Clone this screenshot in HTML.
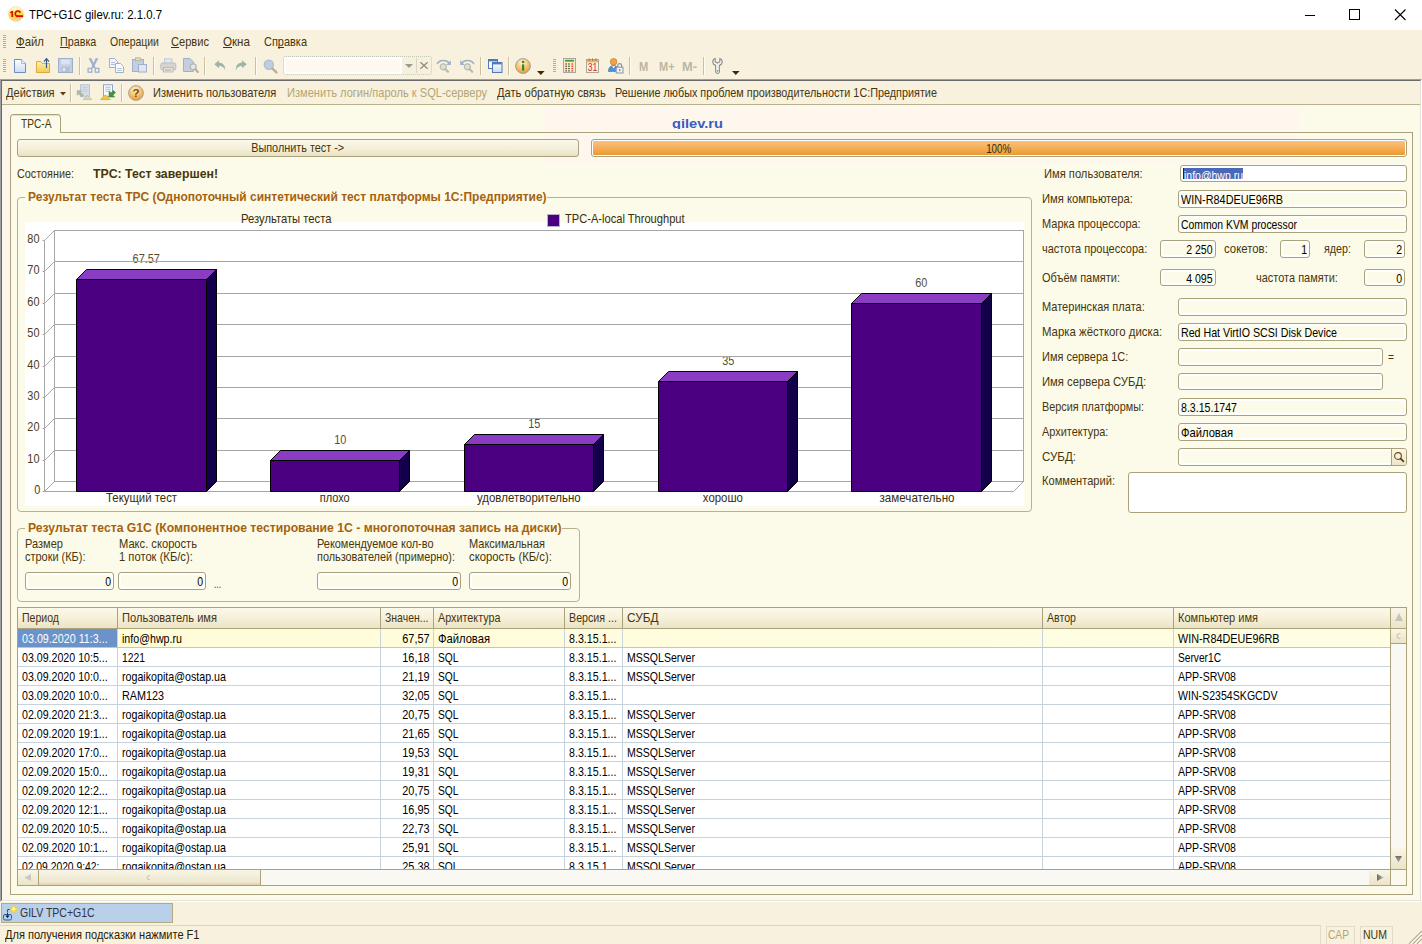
<!DOCTYPE html>
<html><head><meta charset="utf-8"><title>TPC+G1C gilev.ru: 2.1.0.7</title>
<style>

html,body{margin:0;padding:0}
body{width:1422px;height:944px;position:relative;overflow:hidden;background:#fff;font-family:"Liberation Sans",sans-serif;font-size:13px;color:#46360c}
.a{position:absolute;box-sizing:border-box}
.t{position:absolute;white-space:nowrap;font-size:13px;line-height:13px;transform-origin:0 0;color:#46360c}
.f{border:1px solid #a9a27b;border-radius:3px;background:#fcfbea;box-shadow:inset 0 0 0 2px #fff}
.gb{border:1px solid #b9b18c;border-radius:4px}
.sep{width:2px;border-left:1px solid #c9c0a0;border-right:1px solid #fffdf2}
svg{position:absolute;overflow:visible}

</style></head><body>
<div class="a" style="left:0px;top:0px;width:1422px;height:30px;background:#fff"></div>
<svg style="left:8px;top:6px" width="16" height="16" viewBox="0 0 16 16"><defs><linearGradient id="g1c" x1="0" y1="0" x2="0" y2="1"><stop offset="0" stop-color="#fffbe6"/><stop offset=".22" stop-color="#fdf3a8"/><stop offset=".5" stop-color="#f8df2c"/><stop offset=".72" stop-color="#f6d845"/><stop offset="1" stop-color="#fad9b0"/></linearGradient></defs><circle cx="8" cy="8" r="7.4" fill="url(#g1c)" stroke="#ecc57a" stroke-width=".7" stroke-dasharray="1 .5"/><path d="M2.1 6L3.9 4.9H5.1V11H3.4V6.7L2.1 7.4z" fill="#e40a04"/><path d="M12.4 6.6A2.7 2.7 0 1 0 9.6 10.4" fill="none" stroke="#e40a04" stroke-width="1.7"/><rect x="8.2" y="9.2" width="7" height="1.9" fill="#e40a04"/></svg>
<span class="t" style="left:28.6px;top:9px;transform:scaleX(0.9490);font-size:12px;line-height:12px;color:#000">TPC+G1C gilev.ru: 2.1.0.7</span>
<svg style="left:1290px;top:0" width="132" height="30" viewBox="0 0 132 30" shape-rendering="crispEdges"><path d="M15 15.5h10" stroke="#000" stroke-width="1"/><rect x="59.5" y="9.5" width="10" height="10" fill="none" stroke="#000"/><path d="M105 9.5l10.5 10.5M115.5 9.5L105 20" stroke="#000" stroke-width="1.1" shape-rendering="auto"/></svg>
<div class="a" style="left:0px;top:30px;width:1422px;height:49px;background:#f8f1de"></div>
<div class="a" style="left:3px;top:35px;width:3px;height:14px;background:repeating-linear-gradient(#b9af86 0,#b9af86 1px,transparent 1px,transparent 2px)"></div>
<div class="a" style="left:3px;top:59px;width:3px;height:14px;background:repeating-linear-gradient(#b9af86 0,#b9af86 1px,transparent 1px,transparent 2px)"></div>
<span class="t" style="left:16.3px;top:35px;transform:scaleX(0.8727)">Файл</span>
<div class="a" style="left:16px;top:47px;width:9px;height:1px;background:#46360c"></div>
<span class="t" style="left:60.2px;top:35px;transform:scaleX(0.8265)">Правка</span>
<div class="a" style="left:60px;top:47px;width:8px;height:1px;background:#46360c"></div>
<span class="t" style="left:110px;top:35px;transform:scaleX(0.8053)">Операции</span>
<span class="t" style="left:171px;top:35px;transform:scaleX(0.8533)">Сервис</span>
<div class="a" style="left:171px;top:47px;width:8px;height:1px;background:#46360c"></div>
<span class="t" style="left:223px;top:35px;transform:scaleX(0.8939)">Окна</span>
<div class="a" style="left:223px;top:47px;width:9px;height:1px;background:#46360c"></div>
<span class="t" style="left:264px;top:35px;transform:scaleX(0.8429)">Справка</span>
<div class="a" style="left:278px;top:47px;width:6px;height:1px;background:#46360c"></div>
<div class="a" style="left:0px;top:79px;width:1422px;height:823px;background:#fcfbea;border-top:1px solid #a0a0a0;border-left:1px solid #a0a0a0;border-right:1px solid #fff;border-bottom:1px solid #fff"></div>
<div class="a" style="left:1px;top:80px;width:1420px;height:821px;border-top:1px solid #696969;border-left:1px solid #696969;border-right:1px solid #e6e3d6;border-bottom:1px solid #e3e3e0"></div>
<div class="a" style="left:2px;top:81px;width:1418px;height:24px;background:#f8f1de;border-bottom:1px solid #b9b18c"></div>
<span class="t" style="left:6.4px;top:86px;transform:scaleX(0.8531)">Действия</span>
<svg style="left:60px;top:92px" width="6" height="4" viewBox="0 0 6 4"><path d="M0 0h6L3 3.5z" fill="#5a4510"/></svg>
<div class="a sep" style="left:70px;top:84px;width:2px;height:18px;"></div>
<div class="a sep" style="left:121px;top:84px;width:2px;height:18px;"></div>
<span class="t" style="left:152.7px;top:86px;transform:scaleX(0.8528)">Изменить пользователя</span>
<span class="t" style="left:286.6px;top:86px;transform:scaleX(0.8525);color:#b4a672">Изменить логин/пароль к SQL-серверу</span>
<span class="t" style="left:496.6px;top:86px;transform:scaleX(0.8561)">Дать обратную связь</span>
<span class="t" style="left:615.3px;top:86px;transform:scaleX(0.8328)">Решение любых проблем производительности 1С:Предприятие</span>
<div class="a" style="left:0px;top:902px;width:1422px;height:42px;background:#f8f1de"></div>
<div class="a" style="left:1px;top:903px;width:172px;height:20px;background:#b9d0ea;border:1px solid #b3aa80"></div>
<span class="t" style="left:19.8px;top:906px;transform:scaleX(0.8088);color:#33333f">GILV TPC+G1C</span>
<div class="a" style="left:0px;top:925px;width:1321px;height:19px;border-top:1px solid #ddd6be;border-right:1px solid #e3dcc4"></div>
<span class="t" style="left:4.5px;top:928px;transform:scaleX(0.8493);color:#2a2208">Для получения подсказки нажмите F1</span>
<div class="a" style="left:1326px;top:926px;width:29px;height:18px;border:1px solid #e3dcc4;border-bottom:0"></div>
<div class="a" style="left:1360px;top:926px;width:33px;height:18px;border:1px solid #e3dcc4;border-bottom:0"></div>
<span class="t" style="left:1328.3px;top:928px;transform:scaleX(0.7855);color:#b4a672">CAP</span>
<span class="t" style="left:1363.4px;top:928px;transform:scaleX(0.8106)">NUM</span>
<svg style="left:1408px;top:930px" width="14" height="14" viewBox="0 0 14 14"><path d="M14 1L1 14M14 5L5 14M14 9L9 14" stroke="#b4ac88" stroke-width="1.3"/><path d="M14 2.4L2.4 14M14 6.4L6.4 14M14 10.4L10.4 14" stroke="#fff" stroke-width="1"/></svg>
<div class="a" style="left:544px;top:105px;width:755px;height:59px;background:#fdf7ee"></div>
<div class="a" style="left:2px;top:105px;width:9px;height:795px;background:#fbf6ea"></div>
<div class="a" style="left:10px;top:132px;width:1403px;height:763px;border:1px solid #a9a27b;border-top-left-radius:0"></div>
<div class="a" style="left:10px;top:114px;width:51px;height:19px;border:1px solid #a9a27b;border-bottom:0;border-radius:4px 4px 0 0;background:#fcfbea"></div>
<div class="a" style="left:13px;top:115px;width:45px;height:1px;background:#fbdc9a"></div>
<span class="t" style="left:20.5px;top:117px;transform:scaleX(0.7821)">TPC-A</span>
<div class="a" style="left:600px;top:113px;width:200px;height:16px;overflow:hidden">
<span class="t" style="left:72.1px;top:4px;transform:scaleX(1.0844);font-size:13.5px;line-height:13.5px;font-weight:bold;color:#3a5cc0">gilev.ru</span>
</div>
<div class="a" style="left:17px;top:139px;width:562px;height:18px;border:1px solid #a9a27b;border-radius:3px;background:linear-gradient(#fbf8ea 0,#f4efd9 55%,#e9e2c4 100%)"></div>
<span class="t" style="left:242.3px;transform-origin:50% 0;top:141px;transform:scaleX(0.8349)">Выполнить тест -&gt;</span>
<div class="a" style="left:591px;top:139px;width:816px;height:18px;border:1px solid #a9a27b;border-radius:3px;background:#fff"></div>
<div class="a" style="left:593px;top:141px;width:812px;height:14px;border-radius:1px;background:linear-gradient(#f9c27c 0,#f5ae58 50%,#ea9a32 100%)"></div>
<span class="t" style="left:982.37px;transform-origin:50% 0;top:142px;transform:scaleX(0.7515);color:#3a2a08">100%</span>
<span class="t" style="left:16.5px;top:167px;transform:scaleX(0.8321)">Состояние:</span>
<span class="t" style="left:93px;top:167px;transform:scaleX(0.9451);font-weight:bold">TPC: Тест завершен!</span>
<div class="a gb" style="left:17px;top:197px;width:1015px;height:315px;"></div>
<div class="a" style="left:25px;top:195px;width:521.5px;height:5px;background:#fcfbea"></div>
<span class="t" style="left:27.5px;top:190px;transform:scaleX(0.9230);font-weight:bold;color:#a5620e">Результат теста TPC (Однопоточный синтетический тест платформы 1С:Предприятие)</span>
<div class="a gb" style="left:17px;top:528px;width:563px;height:74px;"></div>
<div class="a" style="left:25px;top:526px;width:536.5px;height:5px;background:#fcfbea"></div>
<span class="t" style="left:27.5px;top:521px;transform:scaleX(0.9381);font-weight:bold;color:#a5620e">Результат теста G1C (Компонентное тестирование 1С - многопоточная запись на диски)</span>
<span class="t" style="left:25px;top:537px;transform:scaleX(0.8503)">Размер</span>
<span class="t" style="left:25px;top:550px;transform:scaleX(0.8419)">строки (КБ):</span>
<span class="t" style="left:118.7px;top:537px;transform:scaleX(0.8571)">Макс. скорость</span>
<span class="t" style="left:118.7px;top:550px;transform:scaleX(0.8614)">1 поток (КБ/с):</span>
<span class="t" style="left:317.3px;top:537px;transform:scaleX(0.8405)">Рекомендуемое кол-во</span>
<span class="t" style="left:317.3px;top:550px;transform:scaleX(0.8362)">пользователей (примерно):</span>
<span class="t" style="left:469.2px;top:537px;transform:scaleX(0.8466)">Максимальная</span>
<span class="t" style="left:469.2px;top:550px;transform:scaleX(0.8684)">скорость (КБ/с):</span>
<div class="a f" style="left:25px;top:572px;width:89px;height:18px;"></div>
<span class="t" style="left:103.77px;transform-origin:100% 0;top:575px;transform:scaleX(0.8100);color:#000">0</span>
<div class="a f" style="left:118px;top:572px;width:88px;height:18px;"></div>
<span class="t" style="left:195.77px;transform-origin:100% 0;top:575px;transform:scaleX(0.8100);color:#000">0</span>
<div class="a f" style="left:317px;top:572px;width:144px;height:18px;"></div>
<span class="t" style="left:450.77px;transform-origin:100% 0;top:575px;transform:scaleX(0.8100);color:#000">0</span>
<div class="a f" style="left:469px;top:572px;width:102px;height:18px;"></div>
<span class="t" style="left:560.77px;transform-origin:100% 0;top:575px;transform:scaleX(0.8100);color:#000">0</span>
<span class="t" style="left:213.5px;top:577px;transform:scaleX(0.6465)">...</span>
<span class="t" style="left:1043.8px;top:167px;transform:scaleX(0.8591)">Имя пользователя:</span>
<span class="t" style="left:1041.6px;top:192px;transform:scaleX(0.8638)">Имя компьютера:</span>
<span class="t" style="left:1041.6px;top:217px;transform:scaleX(0.8453)">Марка процессора:</span>
<span class="t" style="left:1041.6px;top:242px;transform:scaleX(0.8462)">частота процессора:</span>
<span class="t" style="left:1041.6px;top:271px;transform:scaleX(0.8467)">Объём памяти:</span>
<span class="t" style="left:1041.6px;top:300px;transform:scaleX(0.8479)">Материнская плата:</span>
<span class="t" style="left:1041.6px;top:325px;transform:scaleX(0.8764)">Марка жёсткого диска:</span>
<span class="t" style="left:1041.6px;top:350px;transform:scaleX(0.8443)">Имя сервера 1С:</span>
<span class="t" style="left:1041.6px;top:375px;transform:scaleX(0.8673)">Имя сервера СУБД:</span>
<span class="t" style="left:1041.6px;top:400px;transform:scaleX(0.8350)">Версия платформы:</span>
<span class="t" style="left:1041.6px;top:425px;transform:scaleX(0.8412)">Архитектура:</span>
<span class="t" style="left:1041.6px;top:450px;transform:scaleX(0.8885)">СУБД:</span>
<span class="t" style="left:1041.6px;top:474px;transform:scaleX(0.8536)">Комментарий:</span>
<div class="a" style="left:1180px;top:165px;width:227px;height:17px;border:1px solid #a9a27b;border-radius:3px;background:#fff"></div>
<div class="a" style="left:1183px;top:168px;width:60px;height:11px;background:#4a68b8;overflow:hidden">
<span class="t" style="left:0.5px;top:1px;transform:scaleX(0.8060);color:#fff">info@hwp.ru</span>
</div>
<div class="a" style="left:1183px;top:168px;width:1px;height:11px;background:#2a2010"></div>
<div class="a f" style="left:1178px;top:190px;width:229px;height:18px;"></div>
<span class="t" style="left:1181px;top:193px;transform:scaleX(0.8353);color:#000">WIN-R84DEUE96RB</span>
<div class="a f" style="left:1178px;top:215px;width:229px;height:18px;"></div>
<span class="t" style="left:1181px;top:218px;transform:scaleX(0.7987);color:#000">Common KVM processor</span>
<div class="a f" style="left:1160px;top:240px;width:56px;height:18px;"></div>
<span class="t" style="left:1180.45px;transform-origin:100% 0;top:243px;transform:scaleX(0.8100);color:#000">2 250</span>
<span class="t" style="left:1223.8px;top:242px;transform:scaleX(0.8749)">сокетов:</span>
<div class="a f" style="left:1280px;top:240px;width:30px;height:18px;"></div>
<span class="t" style="left:1299.77px;transform-origin:100% 0;top:243px;transform:scaleX(0.8100);color:#000">1</span>
<span class="t" style="left:1323.6px;top:242px;transform:scaleX(0.8256)">ядер:</span>
<div class="a f" style="left:1364px;top:240px;width:41px;height:18px;"></div>
<span class="t" style="left:1394.77px;transform-origin:100% 0;top:243px;transform:scaleX(0.8100);color:#000">2</span>
<div class="a f" style="left:1160px;top:269px;width:56px;height:17px;"></div>
<span class="t" style="left:1180.45px;transform-origin:100% 0;top:272px;transform:scaleX(0.8100);color:#000">4 095</span>
<span class="t" style="left:1255.5px;top:271px;transform:scaleX(0.8442)">частота памяти:</span>
<div class="a f" style="left:1364px;top:269px;width:41px;height:17px;"></div>
<span class="t" style="left:1394.77px;transform-origin:100% 0;top:272px;transform:scaleX(0.8100);color:#000">0</span>
<div class="a f" style="left:1178px;top:298px;width:229px;height:18px;"></div>
<div class="a f" style="left:1178px;top:323px;width:229px;height:18px;"></div>
<span class="t" style="left:1181px;top:326px;transform:scaleX(0.8189);color:#000">Red Hat VirtIO SCSI Disk Device</span>
<div class="a f" style="left:1178px;top:348px;width:205px;height:18px;"></div>
<span class="t" style="left:1388px;top:350px;transform:scaleX(0.7901)">=</span>
<div class="a f" style="left:1178px;top:373px;width:205px;height:17px;"></div>
<div class="a f" style="left:1178px;top:398px;width:229px;height:18px;"></div>
<span class="t" style="left:1181px;top:401px;transform:scaleX(0.8151);color:#000">8.3.15.1747</span>
<div class="a f" style="left:1178px;top:423px;width:229px;height:18px;"></div>
<span class="t" style="left:1181px;top:426px;transform:scaleX(0.8611);color:#000">Файловая</span>
<div class="a f" style="left:1178px;top:448px;width:229px;height:18px;"></div>
<div class="a" style="left:1391px;top:449px;width:15px;height:16px;border-left:1px solid #a9a27b;border-radius:0 2px 2px 0;background:linear-gradient(#faf7ea,#ece6cc)"></div>
<svg style="left:1393px;top:451px" width="12" height="12" viewBox="0 0 12 12"><circle cx="5" cy="5" r="3.4" fill="#f4f0e0" stroke="#6b4a08" stroke-width="1.1"/><path d="M7.6 7.6L10.4 10.4" stroke="#5a3c06" stroke-width="1.7" stroke-linecap="round"/></svg>
<div class="a" style="left:1128px;top:472px;width:279px;height:41px;border:1px solid #a9a27b;border-radius:3px;background:#fff"></div>
<div class="a" style="left:25px;top:222px;width:999px;height:284px;background:#fff"></div>
<span class="t" style="left:240.5px;top:212px;transform:scaleX(0.8646);color:#3a2e0c">Результаты теста</span>
<div class="a" style="left:547px;top:214px;width:13px;height:13px;background:#4b0082;border:1px solid #b8b0c8"></div>
<span class="t" style="left:564.6px;top:212px;transform:scaleX(0.8545);color:#3a2e0c">TPC-A-local Throughput</span>
<span class="t" style="left:100.95px;transform-origin:50% 0;top:491px;transform:scaleX(0.8754);color:#3a2e0c">Текущий тест</span>
<span class="t" style="left:130.23px;transform-origin:50% 0;top:252px;transform:scaleX(0.8400);color:#5a4e30">67.57</span>
<span class="t" style="left:317.27px;transform-origin:50% 0;top:491px;transform:scaleX(0.8462);color:#3a2e0c">плохо</span>
<span class="t" style="left:332.77px;transform-origin:50% 0;top:433px;transform:scaleX(0.8400);color:#5a4e30">10</span>
<span class="t" style="left:470.16px;transform-origin:50% 0;top:491px;transform:scaleX(0.8821);color:#3a2e0c">удовлетворительно</span>
<span class="t" style="left:526.77px;transform-origin:50% 0;top:417px;transform:scaleX(0.8400);color:#5a4e30">15</span>
<span class="t" style="left:700.14px;transform-origin:50% 0;top:491px;transform:scaleX(0.8749);color:#3a2e0c">хорошо</span>
<span class="t" style="left:720.77px;transform-origin:50% 0;top:354px;transform:scaleX(0.8400);color:#5a4e30">35</span>
<span class="t" style="left:874.5px;transform-origin:50% 0;top:491px;transform:scaleX(0.8929);color:#3a2e0c">замечательно</span>
<span class="t" style="left:914.27px;transform-origin:50% 0;top:276px;transform:scaleX(0.8400);color:#5a4e30">60</span>
<svg style="left:0;top:0" width="1422" height="944" viewBox="0 0 1422 944"><g fill="none" stroke="#a6a6a6" stroke-width="1"><rect x="54.5" y="230.5" width="969" height="251"/><path d="M54.5 450.5H1023.5"/><path d="M54.5 418.5H1023.5"/><path d="M54.5 387.5H1023.5"/><path d="M54.5 356.5H1023.5"/><path d="M54.5 324.5H1023.5"/><path d="M54.5 293.5H1023.5"/><path d="M54.5 261.5H1023.5"/><path d="M54.5 481.5L44.5 491.5h-2"/><path d="M54.5 450.5L44.5 460.5h-2"/><path d="M54.5 418.5L44.5 428.5h-2"/><path d="M54.5 387.5L44.5 397.5h-2"/><path d="M54.5 356.5L44.5 366.5h-2"/><path d="M54.5 324.5L44.5 334.5h-2"/><path d="M54.5 293.5L44.5 303.5h-2"/><path d="M54.5 261.5L44.5 271.5h-2"/><path d="M54.5 230.5L44.5 240.5h-2"/><path d="M44.5 240.5V491.5"/><path d="M44.5 491.5H1013.5L1023.5 481.5"/></g><g stroke="#000" stroke-width="1" stroke-linejoin="round"><path d="M76.5 279.5L86.5 269.5H216.5L206.5 279.5z" fill="#8a3cc2"/><path d="M206.5 279.5L216.5 269.5V481.5L206.5 491.5z" fill="#12004a"/><rect x="76.5" y="279.5" width="130" height="212" fill="#4b0082"/></g><g stroke="#000" stroke-width="1" stroke-linejoin="round"><path d="M270.5 460.5L280.5 450.5H409.5L399.5 460.5z" fill="#8a3cc2"/><path d="M399.5 460.5L409.5 450.5V481.5L399.5 491.5z" fill="#12004a"/><rect x="270.5" y="460.5" width="129" height="31" fill="#4b0082"/></g><g stroke="#000" stroke-width="1" stroke-linejoin="round"><path d="M464.5 444.5L474.5 434.5H603.5L593.5 444.5z" fill="#8a3cc2"/><path d="M593.5 444.5L603.5 434.5V481.5L593.5 491.5z" fill="#12004a"/><rect x="464.5" y="444.5" width="129" height="47" fill="#4b0082"/></g><g stroke="#000" stroke-width="1" stroke-linejoin="round"><path d="M658.5 381.5L668.5 371.5H797.5L787.5 381.5z" fill="#8a3cc2"/><path d="M787.5 381.5L797.5 371.5V481.5L787.5 491.5z" fill="#12004a"/><rect x="658.5" y="381.5" width="129" height="110" fill="#4b0082"/></g><g stroke="#000" stroke-width="1" stroke-linejoin="round"><path d="M851.5 303.5L861.5 293.5H991.5L981.5 303.5z" fill="#8a3cc2"/><path d="M981.5 303.5L991.5 293.5V481.5L981.5 491.5z" fill="#12004a"/><rect x="851.5" y="303.5" width="130" height="188" fill="#4b0082"/></g></svg>
<span class="t" style="left:32.57px;transform-origin:100% 0;top:483px;transform:scaleX(0.8400);color:#4a3c1a">0</span>
<span class="t" style="left:25.33px;transform-origin:100% 0;top:452px;transform:scaleX(0.8400);color:#4a3c1a">10</span>
<span class="t" style="left:25.33px;transform-origin:100% 0;top:420px;transform:scaleX(0.8400);color:#4a3c1a">20</span>
<span class="t" style="left:25.33px;transform-origin:100% 0;top:389px;transform:scaleX(0.8400);color:#4a3c1a">30</span>
<span class="t" style="left:25.33px;transform-origin:100% 0;top:358px;transform:scaleX(0.8400);color:#4a3c1a">40</span>
<span class="t" style="left:25.33px;transform-origin:100% 0;top:326px;transform:scaleX(0.8400);color:#4a3c1a">50</span>
<span class="t" style="left:25.33px;transform-origin:100% 0;top:295px;transform:scaleX(0.8400);color:#4a3c1a">60</span>
<span class="t" style="left:25.33px;transform-origin:100% 0;top:263px;transform:scaleX(0.8400);color:#4a3c1a">70</span>
<span class="t" style="left:25.33px;transform-origin:100% 0;top:232px;transform:scaleX(0.8400);color:#4a3c1a">80</span>
<div class="a" style="left:17px;top:607px;width:1390px;height:279px;border:1px solid #a9a27b;background:#fff"></div>
<div class="a" style="left:18px;top:608px;width:1372px;height:21px;background:linear-gradient(#fcf9ea 0,#f6f0da 50%,#ebe3c4 100%);border-bottom:1px solid #a9a27b"></div>
<span class="t" style="left:22px;top:611px;transform:scaleX(0.8112)">Период</span>
<div class="a" style="left:117px;top:608px;width:1px;height:20px;background:#a9a27b"></div>
<span class="t" style="left:121.5px;top:611px;transform:scaleX(0.8542)">Пользователь имя</span>
<div class="a" style="left:380px;top:608px;width:1px;height:20px;background:#a9a27b"></div>
<span class="t" style="left:384.5px;top:611px;transform:scaleX(0.8058)">Значен...</span>
<div class="a" style="left:433px;top:608px;width:1px;height:20px;background:#a9a27b"></div>
<span class="t" style="left:437.5px;top:611px;transform:scaleX(0.8297)">Архитектура</span>
<div class="a" style="left:564px;top:608px;width:1px;height:20px;background:#a9a27b"></div>
<span class="t" style="left:568.5px;top:611px;transform:scaleX(0.8220)">Версия ...</span>
<div class="a" style="left:622px;top:608px;width:1px;height:20px;background:#a9a27b"></div>
<span class="t" style="left:626.5px;top:611px;transform:scaleX(0.9118)">СУБД</span>
<div class="a" style="left:1042px;top:608px;width:1px;height:20px;background:#a9a27b"></div>
<span class="t" style="left:1046.5px;top:611px;transform:scaleX(0.8151)">Автор</span>
<div class="a" style="left:1173px;top:608px;width:1px;height:20px;background:#a9a27b"></div>
<span class="t" style="left:1177.5px;top:611px;transform:scaleX(0.8495)">Компьютер имя</span>
<div class="a" style="left:18px;top:629px;width:1372px;height:240px;overflow:hidden">
<div class="a" style="left:0px;top:0px;width:1372px;height:18px;background:linear-gradient(90deg,#fffcd8 0,#fffde0 60%,#fffde4 100%)"></div>
<div class="a" style="left:0px;top:0px;width:99px;height:18px;background:#6b93c9"></div>
<div class="a" style="left:0px;top:18px;width:1372px;height:1px;background:#c6d3dc"></div>
<span class="t" style="left:3.8px;top:3px;transform:scaleX(0.8250);color:#fff">03.09.2020 11:3...</span>
<span class="t" style="left:103.8px;top:3px;transform:scaleX(0.8196);color:#000">info@hwp.ru</span>
<span class="t" style="left:378.75px;transform-origin:100% 0;top:3px;transform:scaleX(0.8388);color:#000">67,57</span>
<span class="t" style="left:420px;top:3px;transform:scaleX(0.8611);color:#000">Файловая</span>
<span class="t" style="left:551px;top:3px;transform:scaleX(0.8214);color:#000">8.3.15.1...</span>
<span class="t" style="left:1160px;top:3px;transform:scaleX(0.8312);color:#000">WIN-R84DEUE96RB</span>
<div class="a" style="left:0px;top:37px;width:1372px;height:1px;background:#c6d3dc"></div>
<span class="t" style="left:3.8px;top:22px;transform:scaleX(0.8174);color:#000">03.09.2020 10:5...</span>
<span class="t" style="left:103.8px;top:22px;transform:scaleX(0.7948);color:#000">1221</span>
<span class="t" style="left:378.75px;transform-origin:100% 0;top:22px;transform:scaleX(0.8388);color:#000">16,18</span>
<span class="t" style="left:420px;top:22px;transform:scaleX(0.7880);color:#000">SQL</span>
<span class="t" style="left:551px;top:22px;transform:scaleX(0.8214);color:#000">8.3.15.1...</span>
<span class="t" style="left:609px;top:22px;transform:scaleX(0.8113);color:#000">MSSQLServer</span>
<span class="t" style="left:1160px;top:22px;transform:scaleX(0.7829);color:#000">Server1C</span>
<div class="a" style="left:0px;top:56px;width:1372px;height:1px;background:#c6d3dc"></div>
<span class="t" style="left:3.8px;top:41px;transform:scaleX(0.8174);color:#000">03.09.2020 10:0...</span>
<span class="t" style="left:103.8px;top:41px;transform:scaleX(0.8207);color:#000">rogaikopita@ostap.ua</span>
<span class="t" style="left:378.75px;transform-origin:100% 0;top:41px;transform:scaleX(0.8388);color:#000">21,19</span>
<span class="t" style="left:420px;top:41px;transform:scaleX(0.7880);color:#000">SQL</span>
<span class="t" style="left:551px;top:41px;transform:scaleX(0.8214);color:#000">8.3.15.1...</span>
<span class="t" style="left:609px;top:41px;transform:scaleX(0.8113);color:#000">MSSQLServer</span>
<span class="t" style="left:1160px;top:41px;transform:scaleX(0.8133);color:#000">APP-SRV08</span>
<div class="a" style="left:0px;top:75px;width:1372px;height:1px;background:#c6d3dc"></div>
<span class="t" style="left:3.8px;top:60px;transform:scaleX(0.8174);color:#000">03.09.2020 10:0...</span>
<span class="t" style="left:103.8px;top:60px;transform:scaleX(0.8301);color:#000">RAM123</span>
<span class="t" style="left:378.75px;transform-origin:100% 0;top:60px;transform:scaleX(0.8388);color:#000">32,05</span>
<span class="t" style="left:420px;top:60px;transform:scaleX(0.7880);color:#000">SQL</span>
<span class="t" style="left:551px;top:60px;transform:scaleX(0.8214);color:#000">8.3.15.1...</span>
<span class="t" style="left:1160px;top:60px;transform:scaleX(0.8148);color:#000">WIN-S2354SKGCDV</span>
<div class="a" style="left:0px;top:94px;width:1372px;height:1px;background:#c6d3dc"></div>
<span class="t" style="left:3.8px;top:79px;transform:scaleX(0.8174);color:#000">02.09.2020 21:3...</span>
<span class="t" style="left:103.8px;top:79px;transform:scaleX(0.8207);color:#000">rogaikopita@ostap.ua</span>
<span class="t" style="left:378.75px;transform-origin:100% 0;top:79px;transform:scaleX(0.8388);color:#000">20,75</span>
<span class="t" style="left:420px;top:79px;transform:scaleX(0.7880);color:#000">SQL</span>
<span class="t" style="left:551px;top:79px;transform:scaleX(0.8214);color:#000">8.3.15.1...</span>
<span class="t" style="left:609px;top:79px;transform:scaleX(0.8113);color:#000">MSSQLServer</span>
<span class="t" style="left:1160px;top:79px;transform:scaleX(0.8133);color:#000">APP-SRV08</span>
<div class="a" style="left:0px;top:113px;width:1372px;height:1px;background:#c6d3dc"></div>
<span class="t" style="left:3.8px;top:98px;transform:scaleX(0.8174);color:#000">02.09.2020 19:1...</span>
<span class="t" style="left:103.8px;top:98px;transform:scaleX(0.8207);color:#000">rogaikopita@ostap.ua</span>
<span class="t" style="left:378.75px;transform-origin:100% 0;top:98px;transform:scaleX(0.8388);color:#000">21,65</span>
<span class="t" style="left:420px;top:98px;transform:scaleX(0.7880);color:#000">SQL</span>
<span class="t" style="left:551px;top:98px;transform:scaleX(0.8214);color:#000">8.3.15.1...</span>
<span class="t" style="left:609px;top:98px;transform:scaleX(0.8113);color:#000">MSSQLServer</span>
<span class="t" style="left:1160px;top:98px;transform:scaleX(0.8133);color:#000">APP-SRV08</span>
<div class="a" style="left:0px;top:132px;width:1372px;height:1px;background:#c6d3dc"></div>
<span class="t" style="left:3.8px;top:117px;transform:scaleX(0.8174);color:#000">02.09.2020 17:0...</span>
<span class="t" style="left:103.8px;top:117px;transform:scaleX(0.8207);color:#000">rogaikopita@ostap.ua</span>
<span class="t" style="left:378.75px;transform-origin:100% 0;top:117px;transform:scaleX(0.8388);color:#000">19,53</span>
<span class="t" style="left:420px;top:117px;transform:scaleX(0.7880);color:#000">SQL</span>
<span class="t" style="left:551px;top:117px;transform:scaleX(0.8214);color:#000">8.3.15.1...</span>
<span class="t" style="left:609px;top:117px;transform:scaleX(0.8113);color:#000">MSSQLServer</span>
<span class="t" style="left:1160px;top:117px;transform:scaleX(0.8133);color:#000">APP-SRV08</span>
<div class="a" style="left:0px;top:151px;width:1372px;height:1px;background:#c6d3dc"></div>
<span class="t" style="left:3.8px;top:136px;transform:scaleX(0.8174);color:#000">02.09.2020 15:0...</span>
<span class="t" style="left:103.8px;top:136px;transform:scaleX(0.8207);color:#000">rogaikopita@ostap.ua</span>
<span class="t" style="left:378.75px;transform-origin:100% 0;top:136px;transform:scaleX(0.8388);color:#000">19,31</span>
<span class="t" style="left:420px;top:136px;transform:scaleX(0.7880);color:#000">SQL</span>
<span class="t" style="left:551px;top:136px;transform:scaleX(0.8214);color:#000">8.3.15.1...</span>
<span class="t" style="left:609px;top:136px;transform:scaleX(0.8113);color:#000">MSSQLServer</span>
<span class="t" style="left:1160px;top:136px;transform:scaleX(0.8133);color:#000">APP-SRV08</span>
<div class="a" style="left:0px;top:170px;width:1372px;height:1px;background:#c6d3dc"></div>
<span class="t" style="left:3.8px;top:155px;transform:scaleX(0.8174);color:#000">02.09.2020 12:2...</span>
<span class="t" style="left:103.8px;top:155px;transform:scaleX(0.8207);color:#000">rogaikopita@ostap.ua</span>
<span class="t" style="left:378.75px;transform-origin:100% 0;top:155px;transform:scaleX(0.8388);color:#000">20,75</span>
<span class="t" style="left:420px;top:155px;transform:scaleX(0.7880);color:#000">SQL</span>
<span class="t" style="left:551px;top:155px;transform:scaleX(0.8214);color:#000">8.3.15.1...</span>
<span class="t" style="left:609px;top:155px;transform:scaleX(0.8113);color:#000">MSSQLServer</span>
<span class="t" style="left:1160px;top:155px;transform:scaleX(0.8133);color:#000">APP-SRV08</span>
<div class="a" style="left:0px;top:189px;width:1372px;height:1px;background:#c6d3dc"></div>
<span class="t" style="left:3.8px;top:174px;transform:scaleX(0.8174);color:#000">02.09.2020 12:1...</span>
<span class="t" style="left:103.8px;top:174px;transform:scaleX(0.8207);color:#000">rogaikopita@ostap.ua</span>
<span class="t" style="left:378.75px;transform-origin:100% 0;top:174px;transform:scaleX(0.8388);color:#000">16,95</span>
<span class="t" style="left:420px;top:174px;transform:scaleX(0.7880);color:#000">SQL</span>
<span class="t" style="left:551px;top:174px;transform:scaleX(0.8214);color:#000">8.3.15.1...</span>
<span class="t" style="left:609px;top:174px;transform:scaleX(0.8113);color:#000">MSSQLServer</span>
<span class="t" style="left:1160px;top:174px;transform:scaleX(0.8133);color:#000">APP-SRV08</span>
<div class="a" style="left:0px;top:208px;width:1372px;height:1px;background:#c6d3dc"></div>
<span class="t" style="left:3.8px;top:193px;transform:scaleX(0.8174);color:#000">02.09.2020 10:5...</span>
<span class="t" style="left:103.8px;top:193px;transform:scaleX(0.8207);color:#000">rogaikopita@ostap.ua</span>
<span class="t" style="left:378.75px;transform-origin:100% 0;top:193px;transform:scaleX(0.8388);color:#000">22,73</span>
<span class="t" style="left:420px;top:193px;transform:scaleX(0.7880);color:#000">SQL</span>
<span class="t" style="left:551px;top:193px;transform:scaleX(0.8214);color:#000">8.3.15.1...</span>
<span class="t" style="left:609px;top:193px;transform:scaleX(0.8113);color:#000">MSSQLServer</span>
<span class="t" style="left:1160px;top:193px;transform:scaleX(0.8133);color:#000">APP-SRV08</span>
<div class="a" style="left:0px;top:227px;width:1372px;height:1px;background:#c6d3dc"></div>
<span class="t" style="left:3.8px;top:212px;transform:scaleX(0.8174);color:#000">02.09.2020 10:1...</span>
<span class="t" style="left:103.8px;top:212px;transform:scaleX(0.8207);color:#000">rogaikopita@ostap.ua</span>
<span class="t" style="left:378.75px;transform-origin:100% 0;top:212px;transform:scaleX(0.8388);color:#000">25,91</span>
<span class="t" style="left:420px;top:212px;transform:scaleX(0.7880);color:#000">SQL</span>
<span class="t" style="left:551px;top:212px;transform:scaleX(0.8214);color:#000">8.3.15.1...</span>
<span class="t" style="left:609px;top:212px;transform:scaleX(0.8113);color:#000">MSSQLServer</span>
<span class="t" style="left:1160px;top:212px;transform:scaleX(0.8133);color:#000">APP-SRV08</span>
<div class="a" style="left:0px;top:246px;width:1372px;height:1px;background:#c6d3dc"></div>
<span class="t" style="left:3.8px;top:231px;transform:scaleX(0.7930);color:#000">02.09.2020 9:42:...</span>
<span class="t" style="left:103.8px;top:231px;transform:scaleX(0.8207);color:#000">rogaikopita@ostap.ua</span>
<span class="t" style="left:378.75px;transform-origin:100% 0;top:231px;transform:scaleX(0.8388);color:#000">25,38</span>
<span class="t" style="left:420px;top:231px;transform:scaleX(0.7880);color:#000">SQL</span>
<span class="t" style="left:551px;top:231px;transform:scaleX(0.8214);color:#000">8.3.15.1...</span>
<span class="t" style="left:609px;top:231px;transform:scaleX(0.8113);color:#000">MSSQLServer</span>
<span class="t" style="left:1160px;top:231px;transform:scaleX(0.8133);color:#000">APP-SRV08</span>
<div class="a" style="left:99px;top:0px;width:1px;height:240px;background:#c6d3dc"></div>
<div class="a" style="left:362px;top:0px;width:1px;height:240px;background:#c6d3dc"></div>
<div class="a" style="left:415px;top:0px;width:1px;height:240px;background:#c6d3dc"></div>
<div class="a" style="left:546px;top:0px;width:1px;height:240px;background:#c6d3dc"></div>
<div class="a" style="left:604px;top:0px;width:1px;height:240px;background:#c6d3dc"></div>
<div class="a" style="left:1024px;top:0px;width:1px;height:240px;background:#c6d3dc"></div>
<div class="a" style="left:1155px;top:0px;width:1px;height:240px;background:#c6d3dc"></div>
</div>
<div class="a" style="left:18px;top:647px;width:1372px;height:1px;background:#b4c8e4"></div>
<div class="a" style="left:1390px;top:608px;width:16px;height:261px;background:#f9f8f2;border-left:1px solid #a9a27b"></div>
<div class="a" style="left:1391px;top:608px;width:15px;height:21px;background:linear-gradient(#faf6e6,#ebe4c8);border-bottom:1px solid #a9a27b"></div>
<div class="a" style="left:1391px;top:629px;width:15px;height:15px;background:linear-gradient(#faf6e6,#ebe4c8);border-bottom:1px solid #a9a27b"></div>
<svg style="left:1396px;top:633px" width="6" height="6" viewBox="0 0 6 6"><path d="M4.5 .8A2.4 2.4 0 1 0 4.5 5.2" fill="none" stroke="#c9c5b4" stroke-width="1.2"/></svg>
<div class="a" style="left:1391px;top:848px;width:15px;height:21px;background:linear-gradient(#faf6e6,#ebe4c8)"></div>
<svg style="left:1395px;top:613px" width="8" height="8" viewBox="0 0 8 8"><path d="M4 0L8 8H0z" fill="#c6c4ba"/></svg>
<svg style="left:1395px;top:856px" width="7" height="7" viewBox="0 0 7 7"><defs><linearGradient id="gar" x1="0" y1="0" x2="0" y2="1"><stop offset="0" stop-color="#6e6a66"/><stop offset="1" stop-color="#b6b2b6"/></linearGradient><linearGradient id="gar2" x1="0" y1="0" x2="1" y2="0"><stop offset="0" stop-color="#6e6a66"/><stop offset="1" stop-color="#b6b2b6"/></linearGradient></defs><path d="M0 0H7L3.5 6.6z" fill="url(#gar)"/></svg>
<div class="a" style="left:18px;top:869px;width:1388px;height:16px;background:#f9f8f2;border-top:1px solid #a9a27b"></div>
<div class="a" style="left:18px;top:870px;width:21px;height:15px;background:linear-gradient(#faf6e6,#ebe4c8);border-right:1px solid #a9a27b"></div>
<div class="a" style="left:39px;top:870px;width:222px;height:15px;background:linear-gradient(#f8f5e6,#eae4c8);border-right:1px solid #a9a27b"></div>
<div class="a" style="left:39px;top:883px;width:221px;height:2px;background:repeating-linear-gradient(90deg,#f7cd8a 0,#f7cd8a 1px,#d9d6c8 1px,#d9d6c8 3px);opacity:.8"></div>
<svg style="left:146px;top:875px" width="5" height="5" viewBox="0 0 5 5"><path d="M4 .6A2 2 0 1 0 4 4.4" fill="none" stroke="#c9c5b4" stroke-width="1.1"/></svg>
<div class="a" style="left:1369px;top:870px;width:22px;height:15px;background:linear-gradient(#faf6e6,#ebe4c8);border-right:1px solid #a9a27b"></div>
<div class="a" style="left:1391px;top:870px;width:15px;height:15px;background:#fbf9ee"></div>
<svg style="left:24px;top:874px" width="7" height="7" viewBox="0 0 7 7"><path d="M7 0V7L.4 3.5z" fill="#c9c7c0"/></svg>
<svg style="left:1377px;top:874px" width="7" height="7" viewBox="0 0 7 7"><path d="M0 0V7L6.6 3.5z" fill="url(#gar2)"/></svg>
<svg width="0" height="0" style="left:0;top:0"><defs><linearGradient id="gpg" x1="0" y1="0" x2="0" y2="1"><stop offset="0" stop-color="#fff"/><stop offset="1" stop-color="#c9dcf2"/></linearGradient><linearGradient id="gfo" x1="0" y1="0" x2="0" y2="1"><stop offset="0" stop-color="#fdf0a8"/><stop offset="1" stop-color="#f3c95a"/></linearGradient><radialGradient id="gor" cx="45%" cy="30%" r="70%"><stop offset="0" stop-color="#fff3d8"/><stop offset=".5" stop-color="#fbc876"/><stop offset="1" stop-color="#ee9a2e"/></radialGradient></defs></svg>
<svg style="left:13px;top:58px" width="14" height="16" viewBox="0 0 14 16"><path d="M1.5 1.5H8.5L12.5 5.5V14.5H1.5z" fill="url(#gpg)" stroke="#6888bc" stroke-width=".95"/><path d="M8.5 1.5V5.5H12.5" fill="#e8f0fa" stroke="#93abd0" stroke-width=".8"/></svg>
<svg style="left:35px;top:57px" width="16" height="17" viewBox="0 0 16 17"><path d="M1.5 15.5V4.5H6L7.5 6.5H14.5V15.5z" fill="url(#gfo)" stroke="#e3a83c"/><path d="M11.5 11V2M9 4.6L11.5 1.6L14 4.6" fill="none" stroke="#34568a" stroke-width="1.15"/></svg>
<svg style="left:58px;top:58px" width="15" height="15" viewBox="0 0 15 15"><rect x=".5" y=".5" width="14" height="14" fill="#c3cfe0" stroke="#9fb0cc"/><rect x="3" y="1.5" width="9" height="5" fill="#dbe3ee"/><rect x="3.5" y="9" width="8" height="5" fill="#b3c0d6"/><rect x="5" y="10" width="2.2" height="3" fill="#e4eaf2"/></svg>
<div class="a sep" style="left:79px;top:57px;width:2px;height:18px;"></div>
<svg style="left:87px;top:58px" width="13" height="15" viewBox="0 0 13 15"><path d="M1.6 .3L4.4 .3L8.6 9.4L7 10.6z" fill="#9fb0cc"/><path d="M11.4 .3L8.6 .3L4.4 9.4L6 10.6z" fill="#9fb0cc"/><rect x="1.1" y="10.4" width="3.6" height="3.8" fill="#eef2f8" stroke="#9fb0cc" stroke-width="1.3"/><rect x="8.3" y="10.4" width="3.6" height="3.8" fill="#eef2f8" stroke="#9fb0cc" stroke-width="1.3"/></svg>
<svg style="left:109px;top:58px" width="15" height="15" viewBox="0 0 15 15"><path d="M.5 .5H5.5L8.5 3.5V9.5H.5z" fill="#f2f6fb" stroke="#9fb0cc"/><path d="M6.5 5.5H11.5L14.5 8.5V14.5H6.5z" fill="#f8fafd" stroke="#9fb0cc"/><path d="M2 4.5h4M2 6.5h4M8.2 10.5h4.5M8.2 12.5h4.5" stroke="#aab8cf" stroke-width=".9"/></svg>
<svg style="left:132px;top:57px" width="15" height="16" viewBox="0 0 15 16"><rect x=".5" y="2.5" width="11" height="12" fill="#c3cfe0" stroke="#9fb0cc"/><rect x="3.5" y=".8" width="5" height="3" fill="#e0d8c0" stroke="#b8b098" stroke-width=".8"/><rect x="6.5" y="7.5" width="8" height="7.5" fill="#dfe6f0" stroke="#9fb0cc"/></svg>
<div class="a sep" style="left:153px;top:57px;width:2px;height:18px;"></div>
<svg style="left:160px;top:58px" width="17" height="15" viewBox="0 0 17 15"><rect x="4.5" y=".8" width="7.5" height="5" fill="#dfe6f0" stroke="#bcc6d6" stroke-width=".8"/><rect x=".8" y="5" width="15" height="7" rx="1.5" fill="#d6d4cc" stroke="#b9bbbd" stroke-width=".9"/><rect x="3.5" y="9.5" width="9.5" height="4.5" fill="#e6e4dc" stroke="#b4b4ae" stroke-width=".8"/><path d="M5 12h6" stroke="#a3a39e" stroke-width=".9"/></svg>
<svg style="left:183px;top:58px" width="16" height="16" viewBox="0 0 16 16"><path d="M.5 .5H7L10.5 4V13.5H.5z" fill="#c3cfe0" stroke="#9fb0cc"/><circle cx="10.2" cy="8.8" r="3" fill="#dfe8f2" stroke="#b6b2a6" stroke-width="1.2"/><path d="M12.4 11.2L14.8 14" stroke="#b6aa92" stroke-width="2" stroke-linecap="round"/></svg>
<div class="a sep" style="left:204px;top:57px;width:2px;height:18px;"></div>
<svg style="left:214px;top:60px" width="12" height="11" viewBox="0 0 12 11"><path d="M.3 4.2L5 .3V2.7C9 2.7 11.4 5.2 11.2 10.5C10.2 7.6 8.4 6 5 6V8.3z" fill="#9fb4a8"/></svg>
<svg style="left:235px;top:60px" width="12" height="11" viewBox="0 0 12 11"><path d="M11.7 4.2L7 .3V2.7C3 2.7 .6 5.2 .8 10.5C1.8 7.6 3.6 6 7 6V8.3z" fill="#9fb4a8"/></svg>
<div class="a sep" style="left:255px;top:57px;width:2px;height:18px;"></div>
<svg style="left:263px;top:59px" width="15" height="15" viewBox="0 0 15 15"><circle cx="5.8" cy="5.8" r="4.6" fill="#bfcde0" stroke="#aebbd2" stroke-width="1.2"/><path d="M9.3 9.3L13.4 13.4" stroke="#b9b09a" stroke-width="2.4" stroke-linecap="round"/></svg>
<div class="a" style="left:283px;top:56px;width:149px;height:19px;border:1px dotted #c3c8b8;border-radius:3px;background:#f6f1de"></div>
<div class="a" style="left:284px;top:57px;width:118px;height:17px;background:#fef8ee;border-radius:2px 0 0 2px;box-shadow:inset 0 0 0 2px #fff"></div>
<div class="a" style="left:416px;top:58px;width:1px;height:15px;background:#ddd6bc"></div>
<svg style="left:405px;top:64px" width="8" height="4" viewBox="0 0 8 4"><path d="M0 0H8L4 4z" fill="#9d9a8c"/></svg>
<svg style="left:420px;top:62px" width="8" height="7" viewBox="0 0 8 7"><path d="M.4 .2L7.6 6.8M7.6 .2L.4 6.8" stroke="#8f8c80" stroke-width="1.3"/></svg>
<svg style="left:436px;top:59px" width="16" height="14" viewBox="0 0 16 14"><path d="M1 5C3.5 .5 10.5 .2 13.5 4.2" fill="none" stroke="#9db0cf" stroke-width="1.5"/><path d="M14.8 1.2V6H10.2z" fill="#9db0cf"/><circle cx="7.2" cy="7.8" r="3" fill="#d5dfee" stroke="#c1b9a6" stroke-width="1.2"/><path d="M9.5 10.2L12 12.8" stroke="#c1b9a6" stroke-width="2.2" stroke-linecap="round"/></svg>
<svg style="left:458.5px;top:59px" width="16" height="14" viewBox="0 0 16 14"><g transform="translate(16,0) scale(-1,1)"><path d="M1 5C3.5 .5 10.5 .2 13.5 4.2" fill="none" stroke="#9db0cf" stroke-width="1.5"/><path d="M14.8 1.2V6H10.2z" fill="#9db0cf"/></g><circle cx="8.4" cy="7.8" r="3" fill="#d5dfee" stroke="#c1b9a6" stroke-width="1.2"/><path d="M10.7 10.2L13.2 12.8" stroke="#c1b9a6" stroke-width="2.2" stroke-linecap="round"/></svg>
<div class="a sep" style="left:480px;top:57px;width:2px;height:18px;"></div>
<svg style="left:488px;top:59px" width="15" height="14" viewBox="0 0 15 14"><rect x=".5" y=".5" width="9" height="9" fill="#f7f9fd" stroke="#5478b4"/><rect x="1" y="1" width="8" height="1.4" fill="#4c7cc0"/><rect x="4.5" y="3.5" width="9.5" height="10" fill="url(#gpg)" stroke="#5478b4"/><rect x="5" y="4" width="8.5" height="1.4" fill="#4c7cc0"/></svg>
<div class="a sep" style="left:508px;top:57px;width:2px;height:18px;"></div>
<svg style="left:515px;top:58px" width="16" height="16" viewBox="0 0 16 16"><circle cx="8" cy="8" r="7.4" fill="url(#gor)" stroke="#9aa0ae" stroke-width="1"/><rect x="7" y="6.4" width="2.2" height="6.2" fill="#2f8a2a"/><circle cx="8.1" cy="4" r="1.3" fill="#2f8a2a"/></svg>
<svg style="left:537px;top:71px" width="8" height="4" viewBox="0 0 8 4"><path d="M0 0H7.6L3.8 4z" fill="#3a2a06"/></svg>
<div class="a" style="left:553px;top:59px;width:3px;height:14px;background:repeating-linear-gradient(#b9af86 0,#b9af86 1px,transparent 1px,transparent 2px)"></div>
<svg style="left:563px;top:58px" width="13" height="15" viewBox="0 0 13 15"><rect x=".5" y=".5" width="12" height="14" fill="#fbe9c6" stroke="#a9a6a0"/><rect x="2" y="1.8" width="9" height="1.8" fill="#3f9a3a"/><rect x="2.4" y="5.4" width="1.5" height="1.2" fill="#4a4030"/><rect x="5.2" y="5.4" width="1.5" height="1.2" fill="#4a4030"/><rect x="8.4" y="5.4" width="1.7" height="1.2" fill="#d23a2a"/><rect x="2.4" y="7.7" width="1.5" height="1.2" fill="#4a4030"/><rect x="5.2" y="7.7" width="1.5" height="1.2" fill="#4a4030"/><rect x="8.4" y="7.7" width="1.7" height="1.2" fill="#d23a2a"/><rect x="2.4" y="10" width="1.5" height="1.2" fill="#4a4030"/><rect x="5.2" y="10" width="1.5" height="1.2" fill="#4a4030"/><rect x="8.4" y="10" width="1.7" height="1.2" fill="#d23a2a"/><rect x="2.4" y="12.3" width="1.5" height="1.2" fill="#4a4030"/><rect x="5.2" y="12.3" width="1.5" height="1.2" fill="#4a4030"/><rect x="8.4" y="12.3" width="1.7" height="1.2" fill="#d23a2a"/></svg>
<svg style="left:586px;top:58px" width="13" height="15" viewBox="0 0 13 15"><rect x=".5" y="1.5" width="12" height="13" fill="#fdf1dc" stroke="#a9a6a0"/><rect x="1" y="2" width="11" height="2.4" fill="#f3b25a"/><path d="M3.2 .4V3M6.5 .4V3M9.8 .4V3" stroke="#8a7a60" stroke-width=".9"/><text x="6.6" y="13" font-family="Liberation Sans" font-size="10" text-anchor="middle" fill="#d0281c" textLength="9.6" lengthAdjust="spacingAndGlyphs">31</text></svg>
<svg style="left:608px;top:58px" width="16" height="16" viewBox="0 0 16 16"><circle cx="5.6" cy="3.8" r="3.3" fill="#f0a24a" stroke="#c77a26" stroke-width=".7"/><path d="M.4 13.5C.6 9.5 2.6 7.6 5.6 7.6C8.2 7.6 9.8 9 10.4 11V13.5z" fill="#4f8fd8" stroke="#3a70b8" stroke-width=".6"/><path d="M4 8L5.6 10.4L7.2 8z" fill="#eaf2fb"/><rect x="8.2" y="9.2" width="6.8" height="5.8" fill="#eef0f4" stroke="#8a94a8" stroke-width="1"/><path d="M9.8 9V7.6A1.9 1.9 0 0 1 13.6 7.6V9" fill="none" stroke="#8a94a8" stroke-width="1.2"/><rect x="11" y="11" width="1.4" height="2.2" fill="#8a94a8"/></svg>
<div class="a sep" style="left:629px;top:57px;width:2px;height:18px;"></div>
<span class="t" style="left:639px;top:60px;transform:scaleX(0.8589);font-weight:bold;color:#bdb6a2">M</span>
<span class="t" style="left:659px;top:60px;transform:scaleX(0.8468);font-weight:bold;color:#bdb6a2">M+</span>
<span class="t" style="left:682px;top:60px;transform:scaleX(0.9897);font-weight:bold;color:#bdb6a2">M-</span>
<div class="a sep" style="left:703px;top:57px;width:2px;height:18px;"></div>
<svg style="left:712px;top:58px" width="11" height="16" viewBox="0 0 11 16"><path d="M3.2 .6V3.6L5.5 5L7.8 3.6V.6C9.8 1.4 10.4 3 10.2 4.4C10 6 8.8 7 7.4 7.4V13.6A1.9 1.9 0 0 1 3.6 13.6V7.4C2.2 7 1 6 .8 4.4C.6 3 1.2 1.4 3.2 .6z" fill="#f2f2f0" stroke="#8f8f8f" stroke-width="1.1"/><circle cx="5.5" cy="12.8" r=".9" fill="#8f8f8f"/></svg>
<svg style="left:732px;top:71px" width="8" height="4" viewBox="0 0 8 4"><path d="M0 0H7.6L3.8 4z" fill="#3a2a06"/></svg>
<svg style="left:76px;top:84px" width="17" height="17" viewBox="0 0 17 17"><rect x="4.5" y=".8" width="9" height="11.5" fill="#d5dde9" stroke="#b5c2d6" stroke-width=".9"/><path d="M6.5 3.5h5M6.5 5.5h5M6.5 7.5h5" stroke="#bccadc" stroke-width=".9"/><path d="M.8 6.3H6.3L4.6 8L8 11.2L5.8 13.4L2.5 10.2L.8 11.8z" fill="#a9b9a2"/><path d="M7 15.6L11.4 11L15.8 15.6z" fill="#d9d3bd" stroke="#c5bea6" stroke-width=".8"/></svg>
<svg style="left:100px;top:84px" width="16" height="17" viewBox="0 0 16 17"><rect x="3.5" y=".8" width="9" height="11.5" fill="#fbfcfe" stroke="#7f9cc6" stroke-width=".9"/><path d="M5.3 3.2h5.4M5.3 5.2h5.4M5.3 7.2h5.4" stroke="#9fb2cf" stroke-width=".9"/><path d="M9 7.3L9 13L14.7 13L12.9 11.2L15.5 8.6L13.4 6.5L10.8 9.1z" fill="#3d9a35" stroke="#2c7a27" stroke-width=".5"/><path d="M.6 15.6L5.4 10.8L10.2 15.6z" fill="#f4c53a" stroke="#e0a528" stroke-width=".8"/></svg>
<svg style="left:128px;top:85px" width="16" height="16" viewBox="0 0 16 16"><circle cx="8" cy="8" r="7.4" fill="url(#gor)" stroke="#a9a39a" stroke-width="1"/><text x="8" y="12.2" font-family="Liberation Sans" font-weight="bold" font-size="11.5" text-anchor="middle" fill="#7a4a14">?</text></svg>
<svg style="left:2px;top:904px" width="17" height="17" viewBox="0 0 17 17"><rect x="1.5" y="10.5" width="8" height="5.5" rx="1.5" fill="#a8d4f4" stroke="#3d5a8a" stroke-width="1"/><path d="M8.5 5.5H5.5V13" fill="none" stroke="#1a1a1a" stroke-width="1" stroke-dasharray="1 .6"/><path d="M3.4 11.4H7.6L5.5 14z" fill="#111"/><path d="M11.8 1.4L15.8 5.2L11.8 9L7.8 5.2z" fill="#fbe14a" stroke="#e8c23a" stroke-width=".7"/><path d="M11.8 2.6L13.4 5.2L11.8 6.4L10 5.2z" fill="#fff6b0"/></svg>
</body></html>
